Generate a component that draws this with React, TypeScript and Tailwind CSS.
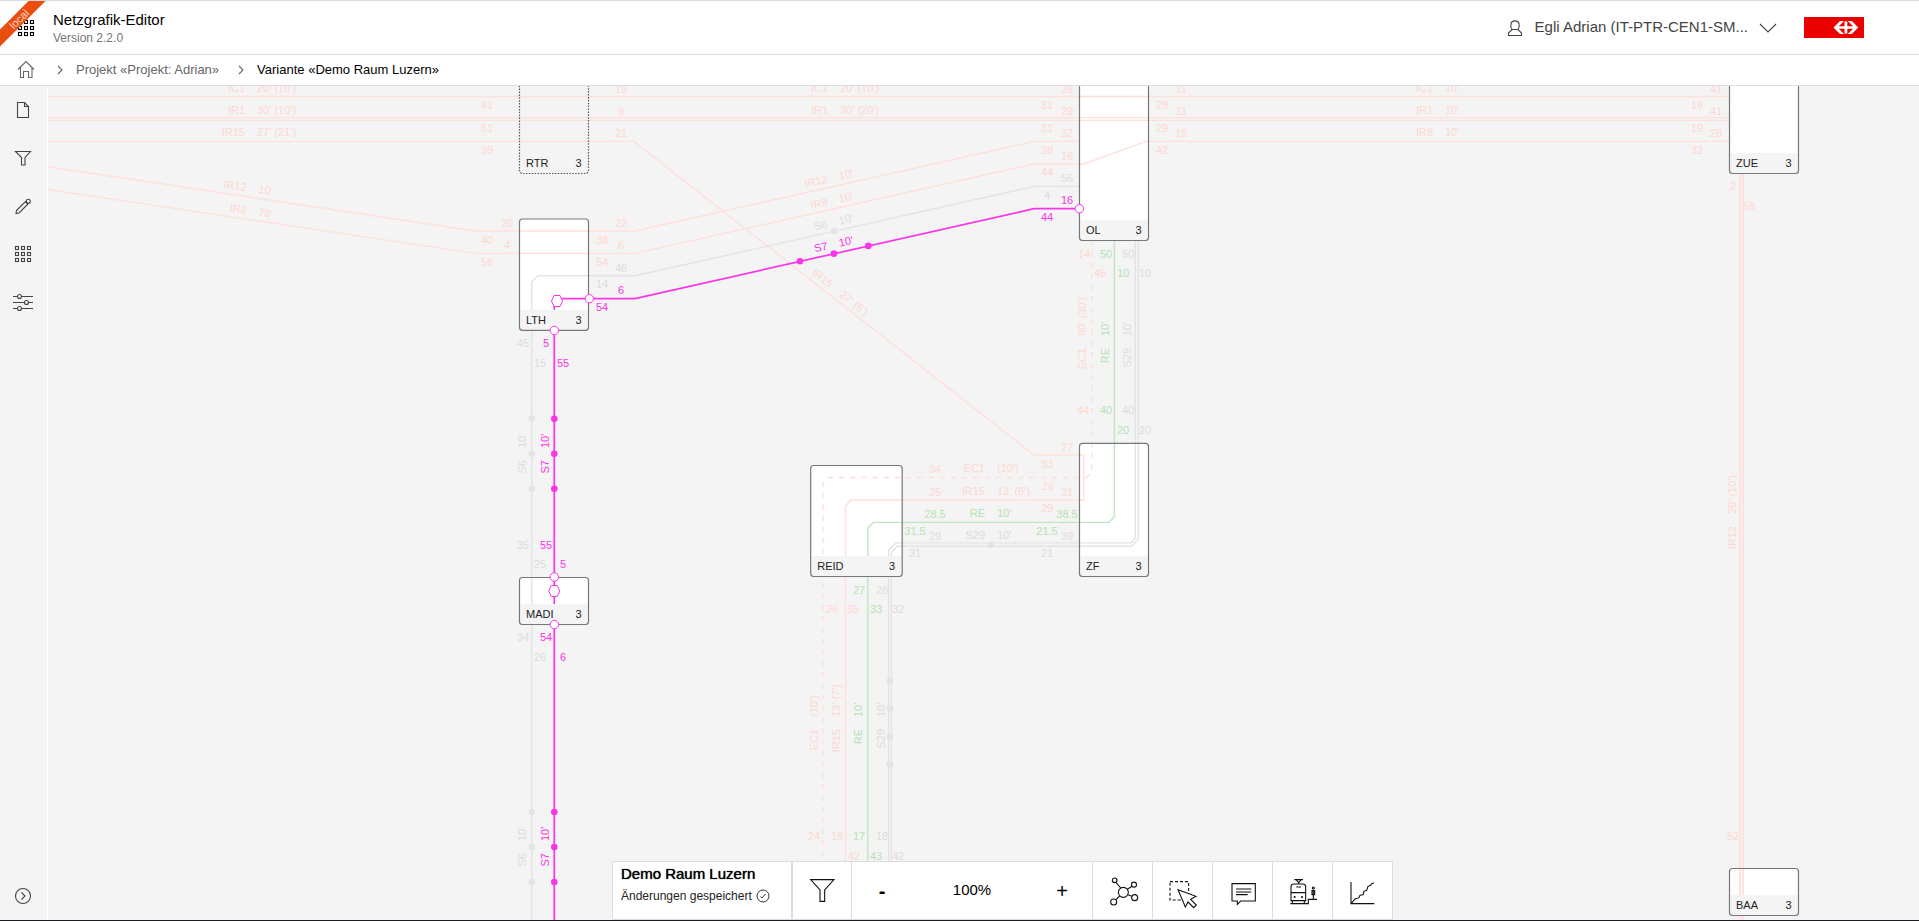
import type { ReactNode } from "react";

const RED = "#ffdfdb";
const GREY = "#e3e3e3";
const GREEN = "#c1e5c1";
const PINK = "#fa34e9";
const EDGE = "#777";

const TEXT_FILL: Record<string, string> = {
  [RED]: "#ffd7d2",
  [GREY]: "#dcdcdc",
  [GREEN]: "#b4e2b4",
  [PINK]: PINK,
};

type Line = { d: string; color: string; width?: number; dashed?: boolean };

const tracks: Line[] = [
  { d: "M48 96.5H1729", color: RED },
  { d: "M48 117.6H1729M48 120.4H1729", color: RED },
  { d: "M48 141.4H634L1034 455H1083.7V500H851L845.5 506V930", color: RED },
  { d: "M48 166.7L475 231H635L1034 141.4H1080", color: RED },
  { d: "M48 189.5L475 253.4H635L1034 164H1084L1146 141.4H1729", color: RED },
  { d: "M531.7 930V282L537.7 275.8H635L1034 186.4H1080", color: GREY },
  { d: "M1091.7 240V472L1086 477.5H828L823 483V930", color: RED, dashed: true },
  { d: "M1114.4 240V516.5L1109 522.4H873.5L867.8 528V930", color: GREEN },
  { d: "M1135.3 240V538L1131 542.9H896L888.6 550V930", color: GREY },
  { d: "M1138.3 240V539L1131.5 546.3H897.5L891.5 552V930", color: GREY },
  { d: "M1740 173V930M1743 173V930", color: RED, width: 1.7 },
  { d: "M554.3 930V302L557.5 298.6H635L1034 208.7H1080", color: PINK, width: 1.7 },
];

type Station = { name: string; x: number; y: number; w: number; bottom: number; dotted?: boolean };

const stations: Station[] = [
  { name: "RTR", x: 519.5, y: 60, w: 69, bottom: 173.5, dotted: true },
  { name: "LTH", x: 519.5, y: 219, w: 69, bottom: 330.3 },
  { name: "MADI", x: 519.5, y: 577.5, w: 69, bottom: 624.5 },
  { name: "REID", x: 810.7, y: 465.5, w: 91.5, bottom: 576.5 },
  { name: "ZF", x: 1079.5, y: 443.3, w: 69, bottom: 576.5 },
  { name: "OL", x: 1079.5, y: 60, w: 69, bottom: 240.5 },
  { name: "ZUE", x: 1729.5, y: 60, w: 69, bottom: 173.5 },
  { name: "BAA", x: 1729.5, y: 868.5, w: 69, bottom: 915.5 },
];

type Num = [x: number, y: number, text: string, italic?: boolean];

const minutes: { color: string; items: Num[] }[] = [
  {
    color: RED,
    items: [
      [487, 105, "41"], [487, 128, "51"], [487, 150, "39"],
      [621, 89, "19"], [621, 111, "9"], [621, 133, "21"],
      [507, 223, "20"], [487, 240, "40"], [507, 245, "4"], [487, 262, "56"],
      [621, 223, "22"], [602, 240, "38"], [621, 245, "6"], [602, 262, "54"],
      [1067, 89, "29"], [1047, 105, "31"], [1067, 111, "29"], [1047, 128, "31"],
      [1067, 133, "32"], [1047, 150, "28"], [1067, 156, "16"], [1047, 172, "44"],
      [1181, 89, "31"], [1162, 105, "29"], [1181, 111, "31"], [1162, 128, "29"],
      [1181, 133, "18"], [1162, 150, "42"],
      [1084, 254, "14", true], [1100, 273, "46"], [1083, 410, "44"],
      [1067, 447, "27"], [1047, 464, "33"], [935, 469, "34"], [1048, 486, "16", true],
      [1067, 492, "31"], [935, 492, "25"], [1047, 508, "29"],
      [832, 609, "26", true], [853, 609, "35"],
      [814, 836, "24"], [837, 836, "18"], [854, 856, "42"],
      [1716, 89, "41"], [1697, 105, "19"], [1716, 111, "41"], [1697, 128, "19"],
      [1716, 133, "28"], [1697, 150, "32"],
      [1733, 186, "2"], [1749, 206, "58"], [1733, 836, "52"],
    ],
  },
  {
    color: GREY,
    items: [
      [621, 268, "46"], [602, 284, "14"], [523, 343, "45"], [540, 363, "15"],
      [1067, 178, "56"], [1047, 195, "4"], [1128, 254, "50"], [1145, 273, "10"],
      [523, 545, "35"], [540, 564, "25"], [523, 637, "34"], [540, 657, "26"],
      [1128, 410, "40"], [1145, 430, "20"], [935, 536, "29"], [1067, 536, "39"],
      [915, 553, "31"], [1047, 553, "21"], [882, 590, "28"], [898, 609, "32"],
      [882, 836, "18"], [898, 856, "42"],
    ],
  },
  {
    color: GREEN,
    items: [
      [1106, 254, "50"], [1123, 273, "10"], [1106, 410, "40"], [1123, 430, "20"],
      [935, 514, "28.5"], [1067, 514, "38.5"], [915, 531, "31.5"], [1047, 531, "21.5"],
      [859, 590, "27"], [876, 609, "33"], [859, 836, "17"], [876, 856, "43"],
    ],
  },
  {
    color: PINK,
    items: [
      [621, 290, "6"], [602, 307, "54"], [546, 343, "5"], [563, 363, "55"],
      [1067, 200, "16"], [1047, 217, "44"],
      [546, 545, "55"], [563, 564, "5"], [546, 637, "54"], [563, 657, "6"],
    ],
  },
];

type Caption = [x: number, y: number, angle: number, name: string, time: string, color: string];

const captions: Caption[] = [
  [251, 92, 0, "IC1", "20' (10')", RED],
  [251, 114, 0, "IR1", "30' (10')", RED],
  [251, 136, 0, "IR15", "27' (21')", RED],
  [252, 192, 8.5, "IR12", "10'", RED],
  [252, 215, 8.5, "IR8", "78'", RED],
  [834, 92, 0, "IC1", "20' (10')", RED],
  [834, 114, 0, "IR1", "30' (20')", RED],
  [834, 181, -12.6, "IR12", "10'", RED],
  [834, 204, -12.6, "IR8", "10'", RED],
  [834, 226, -12.6, "S6", "10'", GREY],
  [834, 248, -12.6, "S7", "10'", PINK],
  [834, 292, 38.1, "IR15", "27' (6')", RED],
  [1439, 92, 0, "IC1", "10'", RED],
  [1439, 114, 0, "IR1", "10'", RED],
  [1439, 136, 0, "IR8", "10'", RED],
  [991, 472, 0, "EC1", "(10')", RED],
  [991, 495, 0, "IR15", "13' (6')", RED],
  [991, 517, 0, "RE", "10'", GREEN],
  [991, 539, 0, "S29", "10'", GREY],
  [526, 454, -90, "S6", "10'", GREY],
  [549, 454, -90, "S7", "10'", PINK],
  [526, 847, -90, "S6", "10'", GREY],
  [549, 847, -90, "S7", "10'", PINK],
  [1086, 342, -90, "EC1", "80' (30')", RED],
  [1109, 342, -90, "RE", "10'", GREEN],
  [1131, 342, -90, "S29", "10'", GREY],
  [818, 723, -90, "EC1", "(10')", RED],
  [840, 723, -90, "IR15", "13' (7')", RED],
  [862, 723, -90, "RE", "10'", GREEN],
  [885, 723, -90, "S29", "10'", GREY],
  [1736, 520, -90, "IR12", "20' (10')", RED],
];

const stops: [number, number, string][] = [
  [834, 231, GREY], [991, 544.7, GREY],
  [531.8, 418.8, GREY], [531.8, 453.8, GREY], [531.8, 488.8, GREY],
  [531.8, 812, GREY], [531.8, 847, GREY], [531.8, 882, GREY],
  [890, 680.5, GREY], [890, 708.5, GREY], [890, 736.5, GREY], [890, 764.5, GREY],
  [800, 261.2, PINK], [834, 253.6, PINK], [868.3, 245.9, PINK],
  [554.3, 418.8, PINK], [554.3, 453.8, PINK], [554.3, 488.8, PINK],
  [554.3, 812, PINK], [554.3, 847, PINK], [554.3, 882, PINK],
];

const ports: [number, number][] = [
  [589.3, 298.7], [1079.4, 208.7], [554.3, 330.5], [554.3, 577], [554.3, 624.6],
];

function NetworkDiagram() {
  return (
    <svg className="absolute inset-0 h-full w-full text-[11px]" role="img" aria-label="Netzgrafik">
      <g transform="translate(-48 -86)">
        {stations.map((s) => (
          <rect
            key={s.name}
            x={s.x}
            y={s.y}
            width={s.w}
            height={s.bottom - s.y}
            rx={3}
            fill={s.dotted ? "#f4f4f4" : "#fff"}
          />
        ))}
        {tracks.map((t) => (
          <path
            key={t.d}
            d={t.d}
            fill="none"
            stroke={t.color}
            strokeWidth={t.width ?? 1.4}
            strokeDasharray={t.dashed ? "5.6 5.6" : undefined}
          />
        ))}
        {stations.map((s) => (
          <g key={s.name}>
            <rect x={s.x + 1} y={s.bottom - 20.5} width={s.w - 2} height={20} fill="#f4f4f4" />
            <rect
              x={s.x}
              y={s.y}
              width={s.w}
              height={s.bottom - s.y}
              rx={3}
              fill="none"
              stroke={s.dotted ? "#555" : EDGE}
              strokeWidth={1.2}
              strokeDasharray={s.dotted ? "1.5 1.4" : undefined}
            />
            <text x={s.x + 6.5} y={s.bottom - 6.5} fill="#222">{s.name}</text>
            <text x={s.x + s.w - 7} y={s.bottom - 6.5} fill="#222" textAnchor="end">3</text>
          </g>
        ))}
        {minutes.map((group) =>
          group.items.map(([x, y, text, italic]) => (
            <text
              key={`${x}-${y}`}
              x={x}
              y={y + 4}
              fill={TEXT_FILL[group.color]}
              textAnchor="middle"
              fontStyle={italic ? "italic" : undefined}
            >
              {text}
            </text>
          )),
        )}
        {captions.map(([x, y, angle, name, time, color]) => (
          <g key={`${x}-${y}`} transform={`translate(${x} ${y}) rotate(${angle})`} fill={TEXT_FILL[color]}>
            <text x={-6} textAnchor="end">{name}</text>
            <text x={6}>{time}</text>
          </g>
        ))}
        {stops.map(([x, y, color]) => (
          <circle key={`${x}-${y}`} cx={x} cy={y} r={3.3} fill={color} />
        ))}
        {ports.map(([x, y]) => (
          <circle key={`${x}-${y}`} cx={x} cy={y} r={4.2} fill="#fff" stroke={PINK} strokeWidth={1} />
        ))}
        {[[557, 301], [554.3, 591]].map(([x, y]) => (
          <path
            key={y}
            transform={`translate(${x} ${y})`}
            d="M-5.5 0L-3 -5.5H3L5.5 0L3 5.5H-3Z"
            fill="#fff"
            stroke={PINK}
            strokeWidth={1}
          />
        ))}
      </g>
    </svg>
  );
}

function Icon({ children }: { children: ReactNode }) {
  return (
    <svg viewBox="0 0 24 24" className="size-6 shrink-0" fill="none" stroke="currentColor" strokeWidth={1.1} aria-hidden="true">
      {children}
    </svg>
  );
}

function ToolIcon({ children }: { children: ReactNode }) {
  return (
    <svg viewBox="0 0 96 96" className="size-8 overflow-visible" fill="none" stroke="#111" strokeWidth={3.3} aria-hidden="true">
      {children}
    </svg>
  );
}

const gridIcon = (
  <Icon>
    {[4.5, 10.5, 16.5].map((y) =>
      [4.5, 10.5, 16.5].map((x) => <rect key={`${x}-${y}`} x={x} y={y} width={3} height={3} />),
    )}
  </Icon>
);

const chevronRight = (
  <Icon>
    <path d="M10 8l4 4-4 4" />
  </Icon>
);

const sideItems: { label: string; icon: ReactNode }[] = [
  { label: "Dokument", icon: <Icon><path d="M6.5 4.5h7l4 4v11h-11zM13.5 4.5v4h4" /></Icon> },
  { label: "Filter", icon: <Icon><path d="M4.5 5.5h15l-5.5 6v7.500h-3.500v-7.500z" /></Icon> },
  {
    label: "Bearbeiten",
    icon: (
      <Icon>
        <path d="M5.5 16.5L14 8q2 .5 2.500 2.500L8 19l-3 .5zM14 8l1.500-1M16.500 10.500l1-1.500" />
        <circle cx={17.3} cy={7.2} r={2} />
      </Icon>
    ),
  },
  { label: "Raster", icon: gridIcon },
  {
    label: "Einstellungen",
    icon: (
      <Icon>
        <path d="M2 6.5h4.500M10.500 6.500H22M2 12.500h11.500M17.500 12.500H22M2 18.500h4.500M10.500 18.500H22" />
        <circle cx={8.5} cy={6.5} r={2} />
        <circle cx={15.5} cy={12.5} r={2} />
        <circle cx={8.5} cy={18.5} r={2} />
      </Icon>
    ),
  },
];

const tools: { label: string; icon: ReactNode }[] = [
  {
    label: "Netzgrafik",
    icon: (
      <ToolIcon>
        <circle cx={49} cy={52} r={15} />
        <circle cx={23} cy={16} r={7} />
        <circle cx={81} cy={29} r={7.5} />
        <circle cx={20} cy={81} r={9} />
        <circle cx={83} cy={68} r={9} />
        <path d="M27 22l14 17M75 34l-14 9M27 74l11-11M74 64l-11-5" />
      </ToolIcon>
    ),
  },
  {
    label: "Auswahl",
    icon: (
      <ToolIcon>
        <rect x={9} y={20} width={56} height={55} strokeDasharray="9 6" />
        <path d="M33 44l54 20-16 9 17 17-8 8-17-17-8 15z" fill="#fff" />
      </ToolIcon>
    ),
  },
  {
    label: "Notizen",
    icon: (
      <ToolIcon>
        <path d="M15 26h70v52H41L31 88V78H15zM27 42h46M27 51h46M27 59h35" />
      </ToolIcon>
    ),
  },
  {
    label: "Perronansicht",
    icon: (
      <ToolIcon>
        <path d="M12 77V33q2-6 8-6h28q6 0 8 6v44zM12 53h44M28 36h14M22 14h26M27 14l8 9 8-9M35 23v4M16 77v9M52 77v9M10 86h54V73h26M79 45v27M75 47h8v12h-8z" />
        <circle cx={79} cy={39} r={3} />
        <circle cx={23} cy={66} r={1.5} />
        <circle cx={45} cy={66} r={1.5} />
      </ToolIcon>
    ),
  },
  {
    label: "Streckengrafik",
    icon: (
      <ToolIcon>
        <path d="M12 21v65h70M13 85l11-13 12-4 3-7 9-2 3-10 8-3 4-12 8-3 3-5 7-2" />
      </ToolIcon>
    ),
  },
];

function Header() {
  return (
    <header className="relative flex h-[55px] shrink-0 items-center overflow-hidden border-y border-[#dcdcdc] bg-white pr-[55px] pl-[14px]">
      <button type="button" aria-label="Menü" className="text-black">{gridIcon}</button>
      <span className="absolute top-[12px] -left-[21px] w-20 -rotate-45 bg-[#e94e10] text-center text-[11px] leading-[12px] text-[#ffd9c8]">
        local
      </span>
      <div className="ml-[15px] flex flex-col">
        <span className="text-[15px] leading-5 text-black">Netzgrafik-Editor</span>
        <span className="text-[12px] leading-4 text-[#767676]">Version 2.2.0</span>
      </div>
      <button type="button" className="ml-auto flex items-center gap-2 text-[15px] text-[#444]">
        <Icon>
          <path d="M5.5 19.5v-2.500l3.500-3.500h6l3.500 3.500v2.500zM9 13.500c-1.500-2-1.500-4-1-6 1-3.500 7-3.500 8 0 .5 2 .5 4-1 6" />
        </Icon>
        <span>Egli Adrian (IT-PTR-CEN1-SM...</span>
        <Icon><path d="M4 8l8 8 8-8" /></Icon>
      </button>
      <svg viewBox="0 0 60 21" className="ml-6 h-[21px] w-[60px]" role="img" aria-label="SBB">
        <rect width={60} height={21} fill="#eb0000" />
        <path
          fill="#fff"
          d="M29.5 10.5L36 4H40L34.8 9.2H40.5V4.5H43.3V9.2H49L43.8 4H47.8L54.3 10.5 47.8 17H43.8L49 11.8H43.3V16.5H40.5V11.8H34.8L40 17H36Z"
        />
      </svg>
    </header>
  );
}

function Breadcrumb() {
  return (
    <nav aria-label="Breadcrumb" className="flex h-[31px] shrink-0 items-center border-b border-[#dcdcdc] bg-white pl-[14px] text-[13px] text-[#666]">
      <a href="#start" aria-label="Startseite">
        <Icon><path d="M4 11.5l8-8 8 8M6.5 9.5v10h3v-6h5v6h3.500v-10" /></Icon>
      </a>
      <span className="ml-[10px]">{chevronRight}</span>
      <a href="#projekt" className="ml-1">Projekt «Projekt: Adrian»</a>
      <span className="ml-[10px]">{chevronRight}</span>
      <a href="#variante" aria-current="page" className="ml-1 text-black">Variante «Demo Raum Luzern»</a>
    </nav>
  );
}

function Toolbar() {
  return (
    <div className="absolute right-[526px] bottom-0 flex h-[59px] border border-[#dcdcdc] bg-white text-black">
      <div className="flex w-[180px] flex-col border-r-2 border-[#dcdcdc] pt-0.5 pl-2">
        <span className="text-[15px] leading-5 [text-shadow:0_0_1px_#000]">Demo Raum Luzern</span>
        <span className="flex items-center gap-1 text-[12px] leading-6 text-[#222]">
          Änderungen gespeichert
          <svg viewBox="0 0 14 14" className="size-3.5" fill="none" stroke="#333" aria-hidden="true">
            <circle cx={7} cy={7} r={6} />
            <path d="M4.5 7.5l1.500 1.500 3.500-4" />
          </svg>
        </span>
      </div>
      <button type="button" aria-label="Filter" className="flex w-[59px] items-center justify-center border-r border-[#dcdcdc]">
        <ToolIcon><path d="M14 14h70L56 45v34H42V45z" /></ToolIcon>
      </button>
      <div className="flex w-[241px] items-center justify-between border-r border-[#dcdcdc] text-[15px]">
        <button type="button" aria-label="Verkleinern" className="w-[60px] text-xl font-bold">-</button>
        <span>100%</span>
        <button type="button" aria-label="Vergrössern" className="w-[60px] text-xl">+</button>
      </div>
      {tools.map((tool) => (
        <button
          key={tool.label}
          type="button"
          aria-label={tool.label}
          className="flex w-[60px] items-center justify-center border-r border-[#dcdcdc] last:w-[59px] last:border-r-0"
        >
          {tool.icon}
        </button>
      ))}
    </div>
  );
}

export default function App() {
  return (
    <div className="flex h-screen flex-col overflow-hidden border-b border-[#1c1c20] bg-[#f4f4f4] font-['Liberation_Sans',Arial,sans-serif]">
      <Header />
      <Breadcrumb />
      <div className="flex min-h-0 flex-1">
        <aside className="flex w-12 shrink-0 flex-col items-start border-r border-white text-[#444]">
          {sideItems.map((item) => (
            <button key={item.label} type="button" aria-label={item.label} className="flex h-12 w-[46px] items-center justify-center">
              {item.icon}
            </button>
          ))}
          <button type="button" aria-label="Ausklappen" className="mt-auto flex h-12 w-[46px] items-center justify-center">
            <Icon>
              <circle cx={12} cy={12} r={7.5} />
              <path d="M10.5 8.5l3.500 3.500-3.500 3.500" />
            </Icon>
          </button>
        </aside>
        <main className="relative min-w-0 flex-1 overflow-hidden">
          <NetworkDiagram />
          <Toolbar />
        </main>
      </div>
    </div>
  );
}
